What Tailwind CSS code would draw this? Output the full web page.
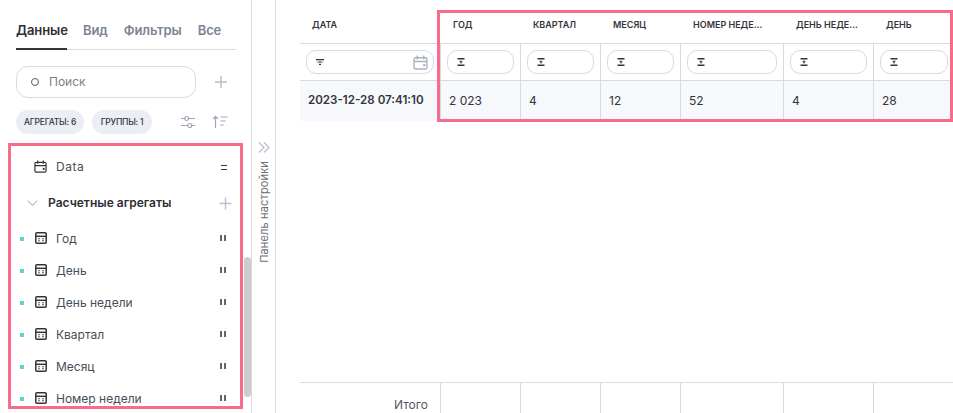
<!DOCTYPE html>
<html lang="ru">
<head>
<meta charset="utf-8">
<script src="https://cdn.jsdelivr.net/npm/@tailwindcss/browser@4"></script>
</head>
<body class="bg-white overflow-hidden font-['Inter','Noto_Sans',sans-serif]">
<svg width="0" height="0" class="absolute">
  <defs>
    <symbol id="calc" viewBox="0 0 12 12"><rect x=".8" y=".8" width="10.400" height="10.400" rx="1" fill="none" stroke="currentColor" stroke-width="1.500"/><path d="M1 4.300h10" stroke="currentColor" stroke-width="1.500"/><path d="M3.200 6.700h1.600M7.200 6.700h1.600M3.200 8.800h1.600M7.200 8.800h1.600" stroke="currentColor" stroke-width="1.100"/></symbol>
    <symbol id="cal" viewBox="0 0 14 14"><path d="M1 4a1.500 1.500 0 0 1 1.500-1.500h9A1.500 1.500 0 0 1 13 4v7.500a1.500 1.500 0 0 1-1.500 1.500h-9A1.500 1.500 0 0 1 1 11.500z" fill="none" stroke="currentColor" stroke-width="1.300"/><path d="M4 .5v3.500M10 .5v3.500M1 6h12" stroke="currentColor" stroke-width="1.300"/><rect x="9.500" y="8.500" width="2" height="2" fill="currentColor"/></symbol>
    <symbol id="sigma" viewBox="0 0 8 8"><path d="M.5 .7h7M.5 7.300h7" stroke="currentColor" stroke-width="1.400"/><path d="M2.500 3.200h3M3 4.800h2" stroke="currentColor" stroke-width="1.100"/></symbol>
    <symbol id="pause" viewBox="0 0 6 6"><path d="M1 0v6M5 0v6" stroke="currentColor" stroke-width="1.500"/></symbol>
  </defs>
</svg>

<div class="relative flex h-[413px] w-[953px] overflow-hidden">
  <aside class="relative w-[252px] h-full shrink-0 border-r border-[#d5dae5]">
    <nav class="flex ml-4 mt-[18px] w-[220px] h-[32px] border-b border-[#d5dae5] text-[13px] tracking-[-0.1px] font-semibold text-[#7b8496]">
      <span class="w-[51px] h-[32px] border-b-2 border-[#33353b] text-[#2d2f34] leading-[24px]">Данные</span>
      <span class="ml-4 leading-[24px]">Вид</span>
      <span class="ml-4 leading-[24px]">Фильтры</span>
      <span class="ml-4 leading-[24px]">Все</span>
    </nav>
    <div class="flex items-center ml-4 mt-[16px]">
      <div class="flex items-center w-[180px] h-[32px] rounded-[12px] border border-[#d5dae5] pl-[14px]">
        <span class="w-[8px] h-[8px] rounded-full border border-[#555b66]"></span>
        <span class="ml-[10px] text-[12px] text-[#7b7f88]">Поиск</span>
      </div>
      <svg class="ml-[18px] text-[#b9bfcf]" width="14" height="14" viewBox="0 0 14 14"><path d="M7 1v12M1 7h12" stroke="currentColor" stroke-width="1.500"/></svg>
    </div>
    <div class="flex items-center ml-4 mt-[12px] h-[24px]">
      <span class="flex items-center justify-center w-[68px] h-[24px] rounded-full bg-[#eceef5] text-[8.5px] font-medium tracking-[-0.2px] text-[#33353b]">АГРЕГАТЫ: 6</span>
      <span class="flex items-center justify-center ml-[8px] w-[60px] h-[24px] rounded-full bg-[#eceef5] text-[8.5px] font-medium tracking-[-0.2px] text-[#33353b]">ГРУППЫ: 1</span>
      <svg class="ml-[28px] text-[#9ea4b2]" width="16" height="14" viewBox="0 0 16 14"><path d="M1 3.500h3.500M9 3.500h6M1 10.500h6.500M12 10.500h3" stroke="currentColor" stroke-width="1.200"/><circle cx="6.700" cy="3.500" r="2" fill="none" stroke="currentColor" stroke-width="1.200"/><circle cx="9.700" cy="10.500" r="2" fill="none" stroke="currentColor" stroke-width="1.200"/></svg>
      <svg class="ml-[16px] text-[#9ea4b2]" width="16" height="14" viewBox="0 0 16 14"><path d="M3.500 13V1.500M1 4l2.500-2.700L6 4M8.500 2h7M8.500 6h5M8.500 10h3" fill="none" stroke="currentColor" stroke-width="1.200"/></svg>
    </div>

    <ul class="absolute left-0 top-[151px] w-[244px] text-[12px] text-[#4a4d55]">
      <li class="flex items-center h-[32px] pl-[34px] pr-[17px]">
        <svg class="text-[#33353b]" width="13" height="14" viewBox="0 0 14 15"><use href="#cal" width="14" height="14"/></svg>
        <span class="ml-[9px] tracking-[0.5px]">Data</span>
        <span class="ml-auto w-[6px] h-[5px] border-y-[1.5px] border-[#33353b]"></span>
      </li>
      <li class="flex items-center h-[40px] pl-[27px] pr-[12px]">
        <svg class="text-[#b9bfcf]" width="11" height="7" viewBox="0 0 11 7"><path d="M.700 .700 5.500 5.500 10.300 .700" fill="none" stroke="currentColor" stroke-width="1.200"/></svg>
        <span class="ml-[10px] font-semibold text-[#2d2f34]">Расчетные агрегаты</span>
        <svg class="ml-auto text-[#b9bfcf]" width="13" height="13" viewBox="0 0 13 13"><path d="M6.500 .500v12M.500 6.500h12" stroke="currentColor" stroke-width="1.400"/></svg>
      </li>
      <li class="flex items-center h-[32px] pl-[20px] pr-[18px]"><span class="w-[4px] h-[4px] bg-[#66cfcf]"></span><svg class="ml-[11px] -mt-[2px] text-[#33353b]" width="12" height="12"><use href="#calc"/></svg><span class="ml-[9px]">Год</span><svg class="ml-auto -mt-[2px] text-[#33353b]" width="6" height="6"><use href="#pause"/></svg></li>
      <li class="flex items-center h-[32px] pl-[20px] pr-[18px]"><span class="w-[4px] h-[4px] bg-[#66cfcf]"></span><svg class="ml-[11px] -mt-[2px] text-[#33353b]" width="12" height="12"><use href="#calc"/></svg><span class="ml-[9px]">День</span><svg class="ml-auto -mt-[2px] text-[#33353b]" width="6" height="6"><use href="#pause"/></svg></li>
      <li class="flex items-center h-[32px] pl-[20px] pr-[18px]"><span class="w-[4px] h-[4px] bg-[#66cfcf]"></span><svg class="ml-[11px] -mt-[2px] text-[#33353b]" width="12" height="12"><use href="#calc"/></svg><span class="ml-[9px]">День недели</span><svg class="ml-auto -mt-[2px] text-[#33353b]" width="6" height="6"><use href="#pause"/></svg></li>
      <li class="flex items-center h-[32px] pl-[20px] pr-[18px]"><span class="w-[4px] h-[4px] bg-[#66cfcf]"></span><svg class="ml-[11px] -mt-[2px] text-[#33353b]" width="12" height="12"><use href="#calc"/></svg><span class="ml-[9px]">Квартал</span><svg class="ml-auto -mt-[2px] text-[#33353b]" width="6" height="6"><use href="#pause"/></svg></li>
      <li class="flex items-center h-[32px] pl-[20px] pr-[18px]"><span class="w-[4px] h-[4px] bg-[#66cfcf]"></span><svg class="ml-[11px] -mt-[2px] text-[#33353b]" width="12" height="12"><use href="#calc"/></svg><span class="ml-[9px]">Месяц</span><svg class="ml-auto -mt-[2px] text-[#33353b]" width="6" height="6"><use href="#pause"/></svg></li>
      <li class="flex items-center h-[32px] pl-[20px] pr-[18px]"><span class="w-[4px] h-[4px] bg-[#66cfcf]"></span><svg class="ml-[11px] -mt-[2px] text-[#33353b]" width="12" height="12"><use href="#calc"/></svg><span class="ml-[9px]">Номер недели</span><svg class="ml-auto -mt-[2px] text-[#33353b]" width="6" height="6"><use href="#pause"/></svg></li>
    </ul>
    <div class="absolute left-[244px] top-[257px] w-[7px] h-[140px] rounded-full bg-[#cdcdcd]"></div>
  </aside>

  <div class="w-[24px] h-full shrink-0 border-r border-[#d5dae5] flex flex-col items-center pt-[142px]">
    <svg class="text-[#b9bfcf]" width="12" height="11" viewBox="0 0 12 11"><path d="M1 .5l5 5-5 5M6 .5l5 5-5 5" fill="none" stroke="currentColor" stroke-width="1.200"/></svg>
    <span class="mt-[8px] text-[11px] tracking-[0.15px] leading-[14px] text-[#6b6f78] [writing-mode:vertical-rl] rotate-180">Панель настройки</span>
  </div>

  <main class="flex flex-col ml-[24px] w-[653px] h-full">
    <div class="grid grid-cols-[141px_80px_80px_80px_103px_90px_79px] h-[44px] border-b border-[#d5dae5] text-[9px] font-semibold text-[#33353b]">
      <div class="pl-[12px] pt-[19px] leading-[11px]">ДАТА</div>
      <div class="pl-[12px] pt-[19px] leading-[11px]">ГОД</div>
      <div class="pl-[12px] pt-[19px] leading-[11px]">КВАРТАЛ</div>
      <div class="pl-[12px] pt-[19px] leading-[11px]">МЕСЯЦ</div>
      <div class="pl-[12px] pt-[19px] leading-[11px]">НОМЕР НЕДЕ...</div>
      <div class="pl-[12px] pt-[19px] leading-[11px]">ДЕНЬ НЕДЕ...</div>
      <div class="pl-[12px] pt-[19px] leading-[11px]">ДЕНЬ</div>
    </div>
    <div class="grid grid-cols-[141px_80px_80px_80px_103px_90px_79px] h-[37px] border-b border-[#d5dae5]">
      <div class="flex items-center pl-[6px] pr-[6px] border-r border-[#d5dae5]"><div class="flex items-center justify-between w-full h-[24px] rounded-[10px] border border-[#d5dae5] pl-[9px] pr-[5px]"><svg class="text-[#33353b]" width="8" height="6" viewBox="0 0 8 6"><path d="M0 .7h8M1.500 3h5M3 5.300h2" stroke="currentColor" stroke-width="1.200"/></svg><svg class="text-[#aab0c0]" width="15" height="15"><use href="#cal"/></svg></div></div>
      <div class="flex items-center pl-[6px] pr-[6px] border-r border-[#d5dae5]"><div class="flex items-center w-full h-[24px] rounded-[10px] border border-[#d5dae5] pl-[9px]"><svg class="text-[#33353b]" width="8" height="8"><use href="#sigma"/></svg></div></div>
      <div class="flex items-center pl-[6px] pr-[6px] border-r border-[#d5dae5]"><div class="flex items-center w-full h-[24px] rounded-[10px] border border-[#d5dae5] pl-[9px]"><svg class="text-[#33353b]" width="8" height="8"><use href="#sigma"/></svg></div></div>
      <div class="flex items-center pl-[6px] pr-[6px] border-r border-[#d5dae5]"><div class="flex items-center w-full h-[24px] rounded-[10px] border border-[#d5dae5] pl-[9px]"><svg class="text-[#33353b]" width="8" height="8"><use href="#sigma"/></svg></div></div>
      <div class="flex items-center pl-[6px] pr-[6px] border-r border-[#d5dae5]"><div class="flex items-center w-full h-[24px] rounded-[10px] border border-[#d5dae5] pl-[9px]"><svg class="text-[#33353b]" width="8" height="8"><use href="#sigma"/></svg></div></div>
      <div class="flex items-center pl-[6px] pr-[6px] border-r border-[#d5dae5]"><div class="flex items-center w-full h-[24px] rounded-[10px] border border-[#d5dae5] pl-[9px]"><svg class="text-[#33353b]" width="8" height="8"><use href="#sigma"/></svg></div></div>
      <div class="flex items-center pl-[6px] pr-[5px]"><div class="flex items-center w-full h-[24px] rounded-[10px] border border-[#d5dae5] pl-[9px]"><svg class="text-[#33353b]" width="8" height="8"><use href="#sigma"/></svg></div></div>
    </div>
    <div class="grid grid-cols-[141px_80px_80px_80px_103px_90px_79px] h-[40px] bg-[#f6f8fc] text-[12px] text-[#33353b]">
      <div class="flex items-center pl-[8px] text-[11.6px] font-semibold border-r border-[#d5dae5]">2023-12-28 07:41:10</div>
      <div class="flex items-center pl-[8px] border-r border-[#d5dae5]">2 023</div>
      <div class="flex items-center pl-[8px] border-r border-[#d5dae5]">4</div>
      <div class="flex items-center pl-[8px] border-r border-[#d5dae5]">12</div>
      <div class="flex items-center pl-[8px] border-r border-[#d5dae5]">52</div>
      <div class="flex items-center pl-[8px] border-r border-[#d5dae5]">4</div>
      <div class="flex items-center pl-[8px]">28</div>
    </div>
    <div class="flex-1"></div>
    <div class="grid grid-cols-[141px_80px_80px_80px_103px_90px_79px] h-[31px] border-t border-[#d5dae5] text-[12px] text-[#55585f]">
      <div class="flex items-center justify-end pr-[12px] pt-[13px] border-r border-[#d5dae5]">Итого</div>
      <div class="border-r border-[#d5dae5]"></div>
      <div class="border-r border-[#d5dae5]"></div>
      <div class="border-r border-[#d5dae5]"></div>
      <div class="border-r border-[#d5dae5]"></div>
      <div class="border-r border-[#d5dae5]"></div>
      <div></div>
    </div>
  </main>

  <div class="absolute left-[8px] top-[143px] w-[235px] h-[266px] border-[3px] border-[#f96b8b] pointer-events-none"></div>
  <div class="absolute left-[437px] top-[10px] w-[516px] h-[112px] border-[3px] border-[#f96b8b] pointer-events-none"></div>
</div>
</body>
</html>
